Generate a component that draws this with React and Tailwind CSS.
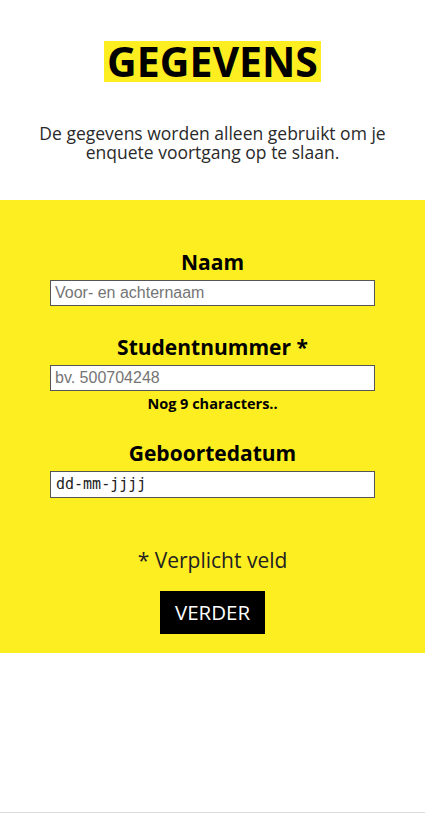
export default function App() {
  return (
    <div className="flex h-[813px] flex-col border-b border-[#dcdcdc] bg-white font-['Open_Sans',sans-serif] text-black">
      <div className="flex justify-center pt-[41px]">
        <h1 className="bg-[#fdee21] px-[3px] text-[41px] font-bold leading-[41px]">GEGEVENS</h1>
      </div>

      <p className="mt-[42px] px-[30px] text-center text-[17.5px] leading-[19px] text-[#2a2a2a]">
        De gegevens worden alleen gebruikt om je enquete voortgang op te slaan.
      </p>

      <div className="mt-[38px] flex h-[453px] flex-col items-center bg-[#fdee21] pt-[47px]">
        <label className="text-[21px] font-bold leading-[30px]">Naam</label>
        <input
          className="mt-[3px] h-[26px] w-[325px] border border-[#555] bg-white px-[4px] font-['Liberation_Sans',sans-serif] text-[16px] placeholder:text-[#757575] outline-none"
          placeholder="Voor- en achternaam"
        />

        <label className="mt-[26px] text-[21px] font-bold leading-[30px]">Studentnummer *</label>
        <input
          className="mt-[3px] h-[26px] w-[325px] border border-[#555] bg-white px-[4px] font-['Liberation_Sans',sans-serif] text-[16px] placeholder:text-[#757575] outline-none"
          placeholder="bv. 500704248"
        />
        <p className="mt-[3px] text-[14.5px] font-bold leading-[20px]">Nog 9 characters..</p>

        <label className="mt-[24px] text-[21px] font-bold leading-[30px]">Geboortedatum</label>
        <div className="mt-[3px] flex h-[27px] w-[325px] items-center border border-[#555] bg-white px-[5px] font-['DejaVu_Sans_Mono',monospace] text-[15px] text-[#222]">
          dd-mm-jjjj
        </div>

        <p className="mt-[47px] text-[21px] leading-[30px] text-[#222]">* Verplicht veld</p>
        <button className="mt-[16px] h-[43px] w-[105px] bg-black text-[20.5px] text-white">VERDER</button>
      </div>
      <div className="flex-1" />
    </div>
  );
}
